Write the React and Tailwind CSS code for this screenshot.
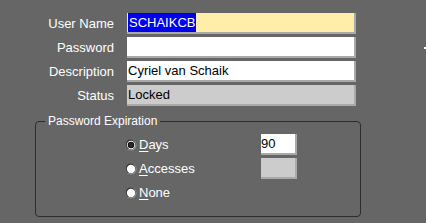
import React from "react";

function Radio({ checked }) {
  return (
    <svg width="12" height="12" viewBox="0 0 12 12" className="shrink-0">
      <circle cx="6" cy="6" r="5.5" fill="#9a9a9a" />
      <circle cx="5.6" cy="5.6" r="5" fill="#333" />
      <circle cx="6" cy="6" r="4.2" fill="#fff" />
      {checked && <circle cx="6" cy="6" r="3.3" fill="#111" />}
      {checked && <circle cx="6" cy="6" r="2.2" fill="#2a2a2a" />}
    </svg>
  );
}

function Row({ label, children }) {
  return (
    <div className="flex h-[21px] items-center">
      <div className="w-[114px] text-right text-[13px] leading-none text-white">{label}</div>
      <div className="ml-[13px]">{children}</div>
    </div>
  );
}

function Field({ bg, children }) {
  return (
    <div
      className={`flex h-[21px] w-[229px] items-center border-r-2 border-b-2 border-[#a9a9a9] pl-[1px] text-[13px] leading-none text-black ${bg}`}
    >
      {children}
    </div>
  );
}

function Opt({ letter, rest, checked, input }) {
  return (
    <div className="flex h-[21px] items-center pl-[89px]">
      <div className="flex w-[136px] items-center gap-[2px]">
        <Radio checked={checked} />
        <span className="text-[13px] leading-none text-white">
          <span className="underline underline-offset-2">{letter}</span>
          {rest}
        </span>
      </div>
      {input}
    </div>
  );
}

export default function App() {
  return (
    <div
      className="relative h-[223px] w-[426px] overflow-hidden bg-[#666666]"
      style={{ fontFamily: '"Liberation Sans", Arial, sans-serif' }}
    >
      <div className="flex flex-col gap-[3px] pt-[13px]">
        <Row label="User Name">
          <Field bg="bg-[#ffeeaa]">
            <span className="flex h-[19px] items-center bg-[#0000f0] px-[1px] text-white">SCHAIKCB</span>
          </Field>
        </Row>
        <Row label="Password">
          <Field bg="bg-white" />
        </Row>
        <Row label="Description">
          <Field bg="bg-white">Cyriel van Schaik</Field>
        </Row>
        <Row label="Status">
          <Field bg="bg-[#cccccc]">Locked</Field>
        </Row>
      </div>

      <fieldset className="ml-[35px] mt-[8px] h-[103px] w-[326px] rounded-[4px] border border-[#2c2c2c]">
        <legend className="ml-[9px] px-[3px] text-[12px] leading-[14px] text-white">Password Expiration</legend>
        <div className="flex flex-col gap-[3px] pt-[6px]">
          <Opt
            letter="D"
            rest="ays"
            checked
            input={
              <div className="flex h-[21px] w-[36px] items-center border-r-2 border-b-2 border-[#a9a9a9] bg-white text-[13px] leading-none text-black">
                90
              </div>
            }
          />
          <Opt
            letter="A"
            rest="ccesses"
            input={<div className="h-[21px] w-[36px] border-r-2 border-b-2 border-[#a9a9a9] bg-[#cccccc]" />}
          />
          <Opt letter="N" rest="one" />
        </div>
      </fieldset>

      <div className="absolute left-[424px] top-[47px] h-[2px] w-[2px] bg-white" />
    </div>
  );
}
